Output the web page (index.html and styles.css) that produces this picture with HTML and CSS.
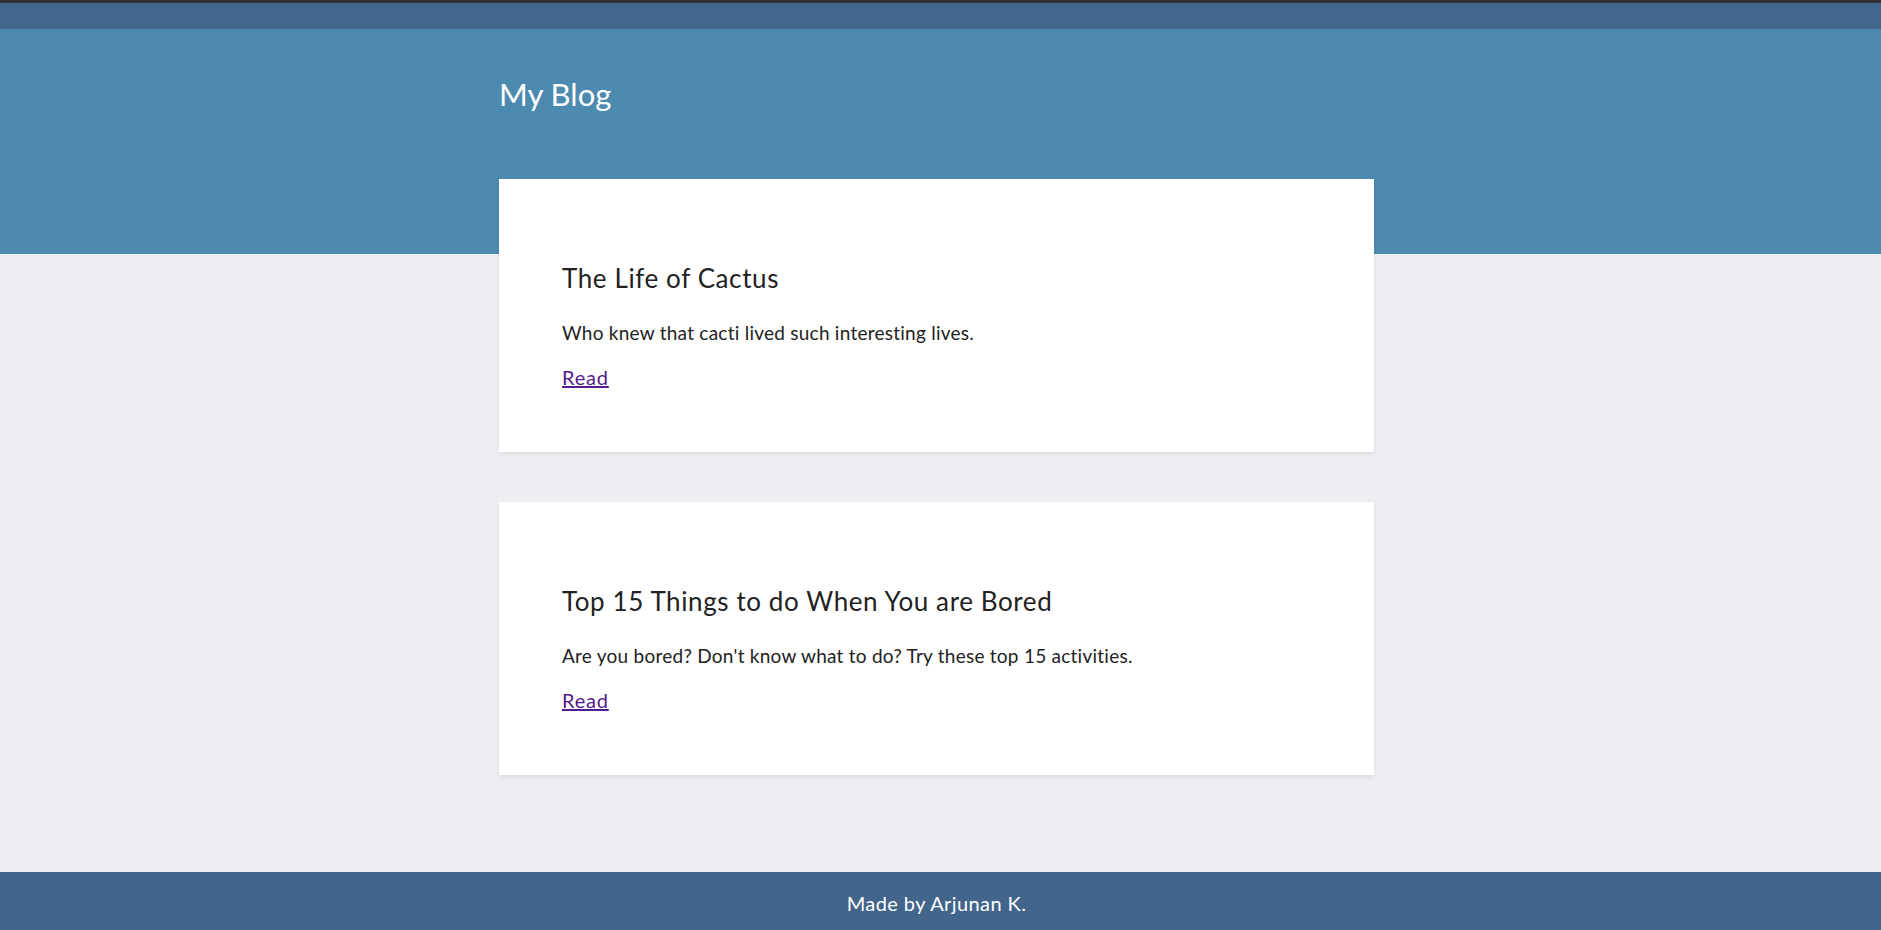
FILE: index.html
```html
<!DOCTYPE html>
<html lang="en">
<head>
<meta charset="utf-8">
<title>My Blog</title>
<link rel="stylesheet" href="styles.css">
</head>
<body>
<nav class="topnav"></nav>
<header class="hero">
  <div class="container">
    <h1 class="site-title">My Blog</h1>
  </div>
</header>
<main class="container posts">
  <article class="card">
    <h2 class="card-title">The Life of Cactus</h2>
    <p class="card-text">Who knew that cacti lived such interesting lives.</p>
    <a class="card-link" href="#">Read</a>
  </article>
  <article class="card">
    <h2 class="card-title">Top 15 Things to do When You are Bored</h2>
    <p class="card-text">Are you bored? Don't know what to do? Try these top 15 activities.</p>
    <a class="card-link" href="#">Read</a>
  </article>
</main>
<footer class="footer">
  <div class="container footer-inner">Made by Arjunan K.</div>
</footer>
</body>
</html>
```

FILE: styles.css
```css
* { box-sizing: border-box; }
html, body { margin: 0; padding: 0; }
body {
  background: #eeedf2;
  font-family: Lato, "Open Sans", sans-serif;
  color: #222;
  line-height: 1.2;
}
.container {
  width: 883px;
  padding-right: 8px;
  margin: 0 auto;
}
.topnav {
  height: 29px;
  background: #42668c;
  border-top: 3px solid #333336;
}
.hero {
  background: #4d8ab0;
  height: 225px;
  padding-top: 47px;
}
.site-title {
  margin: 0;
  color: #fff;
  font-weight: 400;
  font-size: 31px;
}
.posts {
  margin-top: -75px;
  display: flex;
  flex-direction: column;
  gap: 50px;
  padding-bottom: 97px;
}
.card {
  background: #fff;
  height: 273px;
  padding: 84px 63px 0;
  box-shadow: 0 2px 5px rgba(0, 0, 0, 0.08);
}
.card-title {
  margin: 0;
  font-size: 26px;
  font-weight: 400;
  letter-spacing: 0.6px;
  color: #222;
}
.card-text {
  margin: 28px 0 0;
  font-size: 19px;
  letter-spacing: 0.25px;
}
.card-link {
  display: inline-block;
  margin-top: 20px;
  font-size: 20px;
  letter-spacing: 0.8px;
  color: #551a8b;
}
.footer {
  background: #42658b;
  color: #fff;
  height: 58px;
  padding-top: 19px;
  font-size: 20px;
  letter-spacing: 0.4px;
}
.footer-inner {
  text-align: center;
}
```
